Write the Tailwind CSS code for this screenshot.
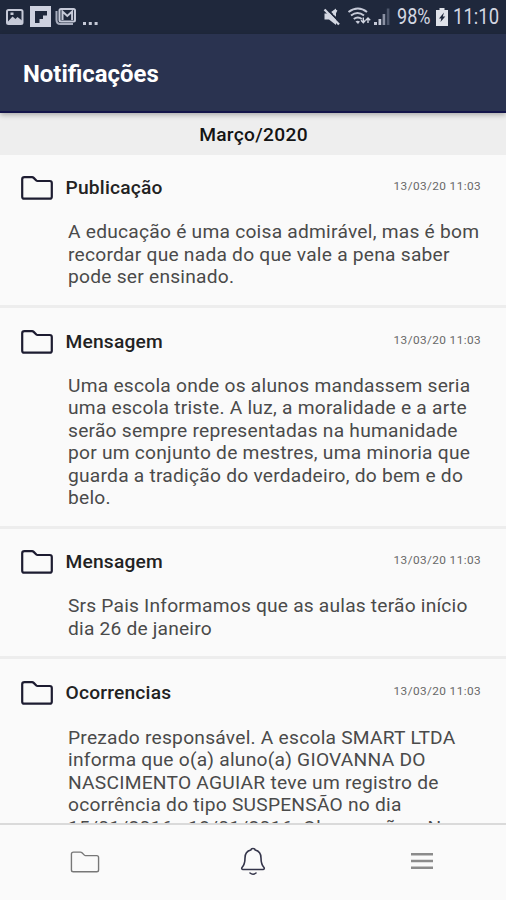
<!DOCTYPE html>
<html lang="pt-BR">
<head>
<meta charset="utf-8">
<title>Notificações</title>
<script src="https://cdn.jsdelivr.net/npm/@tailwindcss/browser@4"></script>
</head>
<body class="w-[506px] h-[900px] overflow-hidden bg-[#fafafa] font-[Roboto,sans-serif] flex flex-col">
<svg class="hidden">
  <symbol id="folder" viewBox="0 0 32 24"><path d="M3.500 1.200h7.500q1 0 1.700.7l2.600 2.600q.5.500 1.200.500H28.800q2 0 2 2v13.700q0 2-2 2H3.200q-2 0-2-2V3.200q0-2 2.300-2z" fill="none" stroke="currentColor" stroke-linejoin="round"/></symbol>
</svg>
<div class="h-[34px] shrink-0 bg-[#1f283c] flex items-center text-[#d3d7e2]">
  <svg class="w-[100px] h-[34px] shrink-0" viewBox="0 0 100 34" fill="none">
    <rect x="7" y="10" width="15.500" height="14" rx="1.500" stroke="#c6cad8" stroke-width="2"/>
    <path d="M8 21.500l4.500-5 3 2.500 2-2 4.500 3.500V24H8z" fill="#c6cad8"/><path d="M10.500 12.500h3v2.500h-3z" fill="#c6cad8"/>
    <rect x="30" y="6" width="21" height="21" fill="#ced1df"/>
    <path d="M35 11h12v4.500h-4V19h-3.500v4H35z" fill="#1f283c"/>
    <path d="M56.500 11v9q0 4 4 4H73" stroke="#a8adbd" stroke-width="2"/>
    <rect x="59.500" y="9" width="15.500" height="12.500" rx="1.500" stroke="#c6cad8" stroke-width="2"/>
    <path d="M62.500 20v-8.500l4.800 4.500 4.800-4.500V20" stroke="#c6cad8" stroke-width="2"/>
    <path d="M83 22h3v3h-3zM88.800 22h3v3h-3zM94.600 22h3v3h-3z" fill="#c6cad8"/>
  </svg>
  <svg class="w-[72px] h-[34px] shrink-0 ml-[220px]" viewBox="320 0 72 34" fill="none">
    <path d="M324.500 13.500h4.500l7-5v16.500l-7-5.500h-4.500z" fill="#d3d7e2"/>
    <path d="M326 8l14 14.500" stroke="#1f283c" stroke-width="2"/>
    <path d="M324.500 9.500l14.500 15" stroke="#d3d7e2" stroke-width="2.300"/>
    <path d="M334 15l2.500-5" stroke="#d3d7e2" stroke-width="2"/>
    <path d="M348.500 12q9.500-7 18.500 0M351 15.500q6.500-5 13 0M353.800 19q4-3 8 0" stroke="#c6cad8" stroke-width="2"/>
    <path d="M355.500 21.500q2-1.500 4.500 0l-2 2.500z" fill="#c6cad8"/>
    <path d="M363.300 17.500v5m-2.300-2.300l2.300 2.500 2.200-2.500M368 23v-5m-2.200 2.300l2.200-2.300 2.200 2.300" stroke="#d3d7e2" stroke-width="1.400"/>
    <path d="M374 22h3v3h-3zM378.500 19h2.700v6h-2.700z" fill="#c6cad8"/>
    <path d="M382.600 14h2.600v11h-2.600z" fill="#8b91a3"/><path d="M386.800 8.500h2.600V25h-2.600z" fill="#4d566b"/>
  </svg>
  <span class="ml-[5px] w-[35px] text-[22px] leading-[34px] whitespace-nowrap"><span class="inline-block origin-left scale-x-[.82]">98%</span></span>
  <svg class="w-[12px] h-[18px] shrink-0 ml-[4px] mb-[1px]" viewBox="0 0 12 18"><path d="M3.500 0h5v2H12V18H0V2h3.500z" fill="#dfe2e9"/><path d="M8 4.500L3 10.500h2.300L4.500 14l4.800-5.500H6.800z" fill="#1f283c"/></svg>
  <span class="ml-[5px] w-[48px] text-[22px] leading-[34px] whitespace-nowrap"><span class="inline-block origin-left scale-x-[.84]">11:10</span></span>
</div>
<header class="relative z-10 h-[79px] shrink-0 bg-[#2a3350] border-b-2 border-[#14154a] shadow-[0_2px_5px_rgba(0,0,0,0.28)] px-[23px] pt-[2px] flex items-center">
  <h1 class="text-white text-[23.900px] leading-[30px] font-bold whitespace-nowrap">Notificações</h1>
</header>
<div class="h-[42px] shrink-0 bg-[#eee] pt-[2px] pl-[1px] flex items-center justify-center text-[19.200px] font-medium text-[#141414] tracking-[0.300px]">Março/2020</div>
<main class="flex-1 min-h-0 overflow-hidden text-[#4a4a4a]">
  <article class="h-[152.500px] border-b-[3px] border-[#ededed]">
    <div class="pt-[19px] flex h-[66px] pl-[21px] pr-[25px] items-start">
      <svg class="w-[32px] h-[24px] mt-[2px] text-[#1d1c31] stroke-[2.200]"><use href="#folder"/></svg>
      <h2 class="ml-[12.500px] flex-1 text-[19.200px] leading-[28px] font-medium text-[#222] tracking-[0.200px]">Publicação</h2>
      <time class="text-[11.800px] leading-[25px] text-[#686868] tracking-[0.400px]">13/03/20 11:03</time>
    </div>
    <p class="pl-[68px] text-[19.200px] leading-[22.500px] tracking-[0.240px] whitespace-nowrap">A educação é uma coisa admirável, mas é bom<br>recordar que nada do que vale a pena saber<br>pode ser ensinado.</p>
  </article>
  <article class="h-[221px] border-b-[3px] border-[#ededed]">
    <div class="pt-[20px] flex h-[67px] pl-[21px] pr-[25px] items-start">
      <svg class="w-[32px] h-[24px] mt-[2px] text-[#1d1c31] stroke-[2.200]"><use href="#folder"/></svg>
      <h2 class="ml-[12.500px] flex-1 text-[19.200px] leading-[28px] font-medium text-[#222] tracking-[0.200px]">Mensagem</h2>
      <time class="text-[11.800px] leading-[25px] text-[#686868] tracking-[0.400px]">13/03/20 11:03</time>
    </div>
    <p class="pl-[68px] text-[19.200px] leading-[22.500px] tracking-[0.240px] whitespace-nowrap">Uma escola onde os alunos mandassem seria<br>uma escola triste. A luz, a moralidade e a arte<br>serão sempre representadas na humanidade<br>por um conjunto de mestres, uma minoria que<br>guarda a tradição do verdadeiro, do bem e do<br>belo.</p>
  </article>
  <article class="h-[130.500px] border-b-[3px] border-[#ededed]">
    <div class="pt-[19px] flex h-[66.500px] pl-[21px] pr-[25px] items-start">
      <svg class="w-[32px] h-[24px] mt-[2px] text-[#1d1c31] stroke-[2.200]"><use href="#folder"/></svg>
      <h2 class="ml-[12.500px] flex-1 text-[19.200px] leading-[28px] font-medium text-[#222] tracking-[0.200px]">Mensagem</h2>
      <time class="text-[11.800px] leading-[25px] text-[#686868] tracking-[0.400px]">13/03/20 11:03</time>
    </div>
    <p class="pl-[68px] text-[19.200px] leading-[22.500px] tracking-[0.200px] whitespace-nowrap">Srs Pais Informamos que as aulas terão início<br>dia 26 de janeiro</p>
  </article>
  <article>
    <div class="pt-[20px] flex h-[67.500px] pl-[21px] pr-[25px] items-start">
      <svg class="w-[32px] h-[24px] mt-[2px] text-[#1d1c31] stroke-[2.200]"><use href="#folder"/></svg>
      <h2 class="ml-[12.500px] flex-1 text-[19.200px] leading-[28px] font-medium text-[#222] tracking-[0.200px]">Ocorrencias</h2>
      <time class="text-[11.800px] leading-[25px] text-[#686868] tracking-[0.400px]">13/03/20 11:03</time>
    </div>
    <p class="pl-[68px] text-[19.200px] leading-[22.500px] tracking-[0.240px] whitespace-nowrap">Prezado responsável. A escola SMART LTDA<br>informa que o(a) aluno(a) GIOVANNA DO<br>NASCIMENTO AGUIAR teve um registro de<br>ocorrência do tipo SUSPENSÃO no dia<br>15/01/2016 - 18/01/2016. Observação: - No</p>
  </article>
</main>
<nav class="h-[77px] shrink-0 border-t-2 border-[#dadada] grid grid-cols-3 items-center justify-items-center">
  <svg class="w-[30px] h-[22px] ml-[2px] mb-[2px] text-[#777] stroke-[1.500]" ><use href="#folder"/></svg>
  <svg class="w-[28px] h-[30px] ml-[1px] mb-[3px]" viewBox="0 0 28 30" fill="none" stroke="#34354a" stroke-width="1.600" stroke-linejoin="round" stroke-linecap="round"><path d="M14 2.500c-1.200 0-2 .6-2.200 1.500C7.500 5 6 8.500 6 12c0 5.500-.8 7-2.800 9.300-.9 1-.4 2.200.8 2.200h20c1.200 0 1.700-1.200.8-2.200C22.800 19 22 17.500 22 12c0-3.500-1.500-7-5.800-8-.2-.9-1-1.500-2.200-1.500zM11 27q3 2.500 6 0"/></svg>
  <svg class="w-[22px] h-[16px] ml-[1px] mb-[4px]" viewBox="0 0 22 16"><path d="M0 0h22v2.600H0zM0 6.700h22v2.600H0zM0 13.400h22V16H0z" fill="#8b8b8b"/></svg>
</nav>
</body>
</html>
